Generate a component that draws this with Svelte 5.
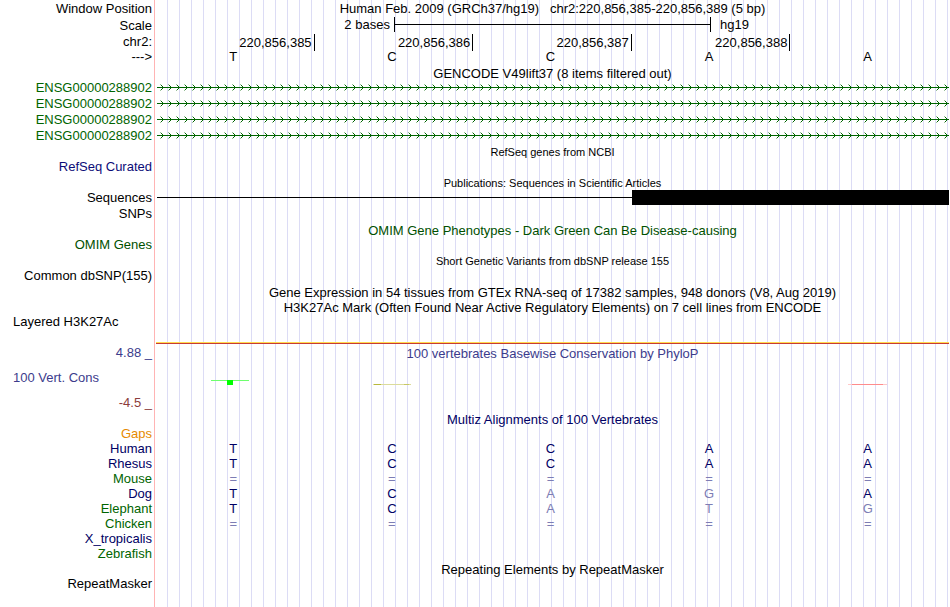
<script lang="ts">
	const bases = ['T', 'C', 'C', 'A', 'A'];
	const positions = ['220,856,385', '220,856,386', '220,856,387', '220,856,388', ''];
	const genes = [1, 2, 3, 4];

	// faded letters are mismatches, '=' marks unalignable sequence
	const species = [
		{ name: 'Gaps', tone: 'orange', row: '     ' },
		{ name: 'Human', tone: 'navy', row: 'TCCAA' },
		{ name: 'Rhesus', tone: 'navy', row: 'TCCAA' },
		{ name: 'Mouse', tone: 'green', row: '=====' },
		{ name: 'Dog', tone: 'navy', row: 'TCAGA' },
		{ name: 'Elephant', tone: 'green', row: 'TCATG' },
		{ name: 'Chicken', tone: 'green', row: '=====' },
		{ name: 'X_tropicalis', tone: 'navy', row: '     ' },
		{ name: 'Zebrafish', tone: 'green', row: '     ' }
	];
</script>

{#snippet title(text: string, tone = '', small = false)}
	<div class="row">
		<h2 class="title {tone}" class:small>{text}</h2>
	</div>
{/snippet}

{#snippet empty(text: string, tone = '')}
	<div class="row track">
		<span class="label {tone}">{text}</span>
	</div>
{/snippet}

<main class="browser">
	<div class="row head">
		<span class="label">Window Position</span>
		<h1 class="title">Human Feb. 2009 (GRCh37/hg19) &nbsp; chr2:220,856,385-220,856,389 (5 bp)</h1>
	</div>
	<div class="row head">
		<span class="label">Scale</span>
		<div class="body scale">
			<span class="length">2 bases</span>
			<span class="bar"></span>
			<span class="assembly">hg19</span>
		</div>
	</div>
	<div class="row">
		<span class="label">chr2:</span>
		<div class="body columns">
			{#each positions as position}
				<span class="position" class:tick={position}>{position}</span>
			{/each}
		</div>
	</div>
	<div class="row track">
		<span class="label">---&gt;</span>
		<div class="body columns">
			{#each bases as base}
				<span class="base">{base}</span>
			{/each}
		</div>
	</div>

	{@render title('GENCODE V49lift37 (8 items filtered out)')}
	{#each genes as gene (gene)}
		<div class="row track">
			<span class="label gene">ENSG00000288902</span>
			<svg class="body arrows" height="16" aria-hidden="true">
				<defs>
					<pattern id="arrow-{gene}" x="1" width="8" height="16" patternUnits="userSpaceOnUse">
						<path d="M3 4h1v1H3zM3 10h1v1H3z" fill="#006400" fill-opacity="0.4" />
						<path d="M4 5h1v1H4zM5 6h1v1H5zM5 8h1v1H5zM4 9h1v1H4zM0 7h8v1H0z" fill="#006400" />
					</pattern>
				</defs>
				<rect x="1" width="100%" height="16" fill="url(#arrow-{gene})" />
			</svg>
		</div>
	{/each}

	{@render title('RefSeq genes from NCBI', '', true)}
	{@render empty('RefSeq Curated', 'blue')}

	{@render title('Publications: Sequences in Scientific Articles', '', true)}
	<div class="row track">
		<span class="label">Sequences</span>
		<div class="body match">
			<span class="thin"></span>
			<span class="thick"></span>
		</div>
	</div>
	{@render empty('SNPs')}

	{@render title('OMIM Gene Phenotypes - Dark Green Can Be Disease-causing', 'omim')}
	{@render empty('OMIM Genes', 'omim')}

	{@render title('Short Genetic Variants from dbSNP release 155', '', true)}
	{@render empty('Common dbSNP(155)')}

	{@render title('Gene Expression in 54 tissues from GTEx RNA-seq of 17382 samples, 948 donors (V8, Aug 2019)')}
	{@render title('H3K27Ac Mark (Often Found Near Active Regulatory Elements) on 7 cell lines from ENCODE')}
	<div class="row layered">
		<span class="label left">Layered H3K27Ac</span>
		<div class="body baseline"></div>
	</div>

	<div class="row phylop">
		<div class="labels">
			<span class="label indigo">4.88 _</span>
			<span class="label left indigo">100 Vert. Cons</span>
			<span class="label maroon">-4.5 _</span>
		</div>
		<div class="body">
			<h2 class="title indigo">100 vertebrates Basewise Conservation by PhyloP</h2>
			<div class="columns signal">
				<svg width="44" height="8" shape-rendering="crispEdges">
					<rect y="1" width="38" height="1" fill="#6eff6e" />
					<rect x="16" y="1" width="6" height="5" fill="#00ff00" />
				</svg>
				<svg width="44" height="8" shape-rendering="crispEdges">
					<rect x="3" y="5" width="38" height="1" fill="#dcdc9b" />
					<rect x="4" y="5" width="7" height="1" fill="#b9b93c" />
					<rect x="34" y="5" width="5" height="1" fill="#c8c864" />
				</svg>
				<span></span>
				<span></span>
				<svg width="44" height="8" shape-rendering="crispEdges">
					<rect x="2" y="5" width="39" height="1" fill="#ffc8c8" />
					<rect x="6" y="5" width="31" height="1" fill="#ff8c8c" />
				</svg>
			</div>
		</div>
	</div>

	{@render title('Multiz Alignments of 100 Vertebrates', 'navy')}
	<table class="alignment">
		<tbody>
			{#each species as { name, tone, row }}
				<tr>
					<th scope="row" class={tone}>{name}</th>
					{#each row as letter, i}
						<td class:faded={letter !== bases[i]}>{letter}</td>
					{/each}
				</tr>
			{/each}
		</tbody>
	</table>

	{@render title('Repeating Elements by RepeatMasker')}
	{@render empty('RepeatMasker')}
</main>

<style>
	:global(body) {
		margin: 0;
		background: #fff;
	}

	.browser {
		box-sizing: border-box;
		min-height: 100vh;
		padding-right: 1px;
		font: 13px/15px 'Liberation Sans', Arial, Helvetica, sans-serif;
		color: #000;
		/* label divider, label area, guide lines */
		background:
			linear-gradient(#ffb4b4, #ffb4b4) 154px 0 / 1px 100% no-repeat,
			linear-gradient(#fff, #fff) 0 0 / 156px 100% no-repeat,
			linear-gradient(to right, #dcdcf5 1px, transparent 1px) 167px 0 / 12px 100%;
	}

	.row {
		display: grid;
		grid-template-columns: 152px minmax(0, 1fr);
		column-gap: 4px;
		height: 15px;
	}

	.head {
		height: 17px;
		line-height: 17px;
	}

	.track {
		height: 16px;
	}

	.label {
		text-align: right;
		white-space: nowrap;
	}

	.left {
		padding-left: 13px;
		text-align: left;
	}

	.body {
		grid-column: 2;
		width: 100%;
	}

	.title {
		grid-column: 2;
		margin: 0;
		font-size: 13px;
		font-weight: normal;
		line-height: 17px;
		text-align: center;
		white-space: nowrap;
	}

	.small {
		font-size: 11px;
	}

	.columns {
		display: grid;
		grid-template-columns: repeat(5, 1fr);
	}

	/* scale and ruler */

	.scale {
		display: grid;
		grid-template-columns: 3fr 4fr 3fr;
		height: 15px;
		line-height: 15px;
	}

	.length {
		padding-right: 4px;
		text-align: right;
	}

	.bar {
		border: solid #000;
		border-width: 0 1px;
		background: linear-gradient(#000, #000) 0 7px / 100% 1px no-repeat;
	}

	.assembly {
		padding-left: 9px;
	}

	.position {
		padding-right: 2px;
		line-height: 17px;
		text-align: right;
	}

	.tick {
		border-right: 1px solid #000;
	}

	.base {
		padding-right: 4px;
		text-align: center;
	}

	/* items */

	.arrows {
		display: block;
	}

	.match {
		display: flex;
		align-items: center;
		height: 15px;
	}

	.thin {
		flex: 3;
		height: 1px;
		margin-left: 1px;
		background: #000;
	}

	.thick {
		flex: 2;
		height: 15px;
		background: #000;
	}

	.layered {
		height: 30px;
	}

	.baseline {
		box-sizing: border-box;
		align-self: end;
		height: 2px;
		border-top: 1px solid #ffdc50;
		background: #c83c32;
	}

	.phylop {
		height: 67px;
	}

	.labels {
		display: flex;
		flex-direction: column;
		gap: 10px;
		padding-top: 1px;
	}

	.phylop .title {
		padding-top: 1px;
	}

	.signal {
		padding-top: 17px;
		justify-items: center;
	}

	.signal svg {
		display: block;
		margin-right: 4px;
	}

	/* alignment */

	.alignment {
		width: 100%;
		table-layout: fixed;
		border-collapse: collapse;
	}

	.alignment th {
		width: 152px;
		padding: 0 4px 0 0;
		font-weight: normal;
		text-align: right;
	}

	.alignment td {
		height: 15px;
		padding: 0 4px 0 0;
		color: #000064;
		text-align: center;
	}

	.alignment td.faded {
		color: #7d7db4;
	}

	.gene,
	.green {
		color: #006400;
	}

	.omim {
		color: #005000;
	}

	.blue {
		color: #0c0c78;
	}

	.navy {
		color: #000064;
	}

	.indigo {
		color: #3c3c8c;
	}

	.maroon {
		color: #8c3c3c;
	}

	.orange {
		color: #e68a00;
	}
</style>
